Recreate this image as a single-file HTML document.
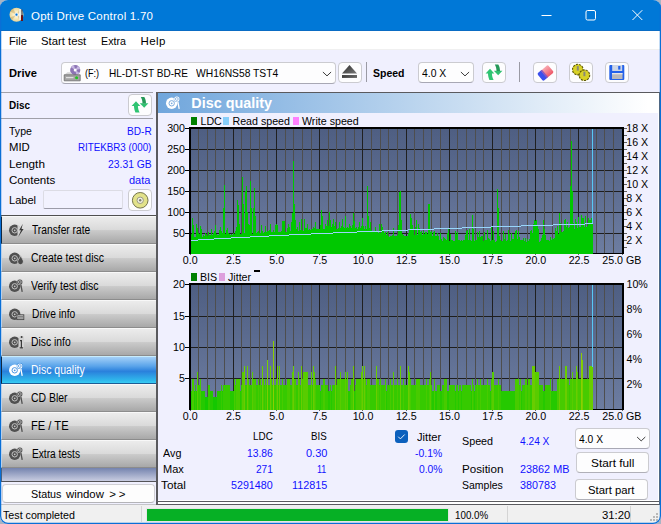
<!DOCTYPE html><html><head><meta charset="utf-8"><title>Opti Drive Control 1.70</title><style>

html,body{margin:0;padding:0}
body{width:661px;height:524px;position:relative;overflow:hidden;background:#a8b4c4;font-family:"Liberation Sans",sans-serif}
#win{position:absolute;left:0;top:0;width:661px;height:524px;background:#f0f0fe;border-radius:8px;overflow:hidden}
.a{position:absolute}
.t{position:absolute;white-space:nowrap;transform-origin:0 0;line-height:20px;height:20px;font-family:"Liberation Sans",sans-serif}
.btn{position:absolute;box-sizing:border-box;border:1px solid #cbcbd0;border-radius:4px;background:#fdfdfe}
.nav{position:absolute;left:1px;width:155px;height:28px;box-sizing:border-box;border-left:1px solid #f0f0f4;border-top:1px solid #f8f8f8;border-bottom:1px solid #8c8c8c;
 background:linear-gradient(#ececec 0%,#dadada 48%,#cacaca 52%,#a8a8a8 100%)}
.nav.sel{border-left:1px solid #101010;border-top:1px solid #c8ecfc;border-bottom:1px solid #1c5c94;background:linear-gradient(#a4d0f8 0%,#5aa4ea 35%,#2a80dc 55%,#30b8ec 90%,#38ccf4 100%)}

</style></head><body><div id="win">
<div class="a" style="left:0;top:0;width:661px;height:31px;background:#0078d7"></div>
<div class="a" style="left:0;top:30px;width:661px;height:1px;background:#0a6cc4"></div>
<div class="a" style="left:1px;top:31px;width:659px;height:18px;background:#fff"></div>
<div class="a" style="left:1px;top:49px;width:659px;height:1px;background:#f0f0f0"></div>
<svg class="a" style="left:8px;top:6px" width="18" height="18" viewBox="0 0 18 18"><defs><radialGradient id="cd"><stop offset="0.3" stop-color="#fff6d0"/><stop offset="1" stop-color="#e8d498"/></radialGradient></defs><circle cx="8.5" cy="8.7" r="7" fill="url(#cd)"/><path d="M8.5 8.7L2.2 5.6A7 7 0 0 1 5 2.6ZM8.5 8.7L14.8 11.8A7 7 0 0 1 12 14.8ZM8.5 8.7L4 14A7 7 0 0 1 2 11.5ZM8.5 8.7L12 2.6A7 7 0 0 1 14.6 5.2Z" fill="#b89850" fill-opacity="0.4"/><circle cx="8.5" cy="8.7" r="2" fill="#e8e8f0"/><circle cx="8.5" cy="8.7" r="1.1" fill="#0078d7"/><rect x="11.2" y="3" width="1.6" height="11" fill="#f4f4f4"/><rect x="13" y="9" width="2" height="6" fill="#701010"/><rect x="13.4" y="3.5" width="1.2" height="6" fill="#3a4a6a"/></svg>
<svg class="a" style="left:530px;top:0" width="131" height="31" viewBox="530 0 131 31" fill="none" stroke="#fff" stroke-width="1"><path d="M541.5 15.5H551.5"/><rect x="586" y="10.5" width="9.5" height="9.5" rx="1.5"/><path d="M632.5 10.2L642.3 20M642.3 10.2L632.5 20"/></svg>
<div class="btn" style="left:61px;top:62px;width:275px;height:22px;border-bottom-color:#a8a8b4"></div>
<div class="btn" style="left:338px;top:62px;width:24px;height:21px"></div>
<div class="a" style="left:366px;top:62px;width:1px;height:20px;background:#9a9aa4"></div>
<div class="btn" style="left:418px;top:62px;width:56px;height:21px;border-bottom-color:#a8a8b4"></div>
<div class="btn" style="left:482px;top:62px;width:24px;height:21px"></div>
<div class="a" style="left:519px;top:62px;width:1px;height:20px;background:#9a9aa4"></div>
<div class="btn" style="left:533px;top:62px;width:24px;height:21px"></div>
<div class="btn" style="left:569px;top:62px;width:24px;height:21px"></div>
<div class="btn" style="left:605px;top:62px;width:24px;height:21px"></div>
<div class="btn" style="left:128px;top:94px;width:24px;height:22px"></div>
<div class="btn" style="left:128px;top:189px;width:24px;height:22px"></div>
<div class="a" style="left:1px;top:92px;width:152px;height:1px;background:#a0a0a8"></div>
<div class="a" style="left:1px;top:118px;width:152px;height:1px;background:#a0a0a8"></div>
<div class="a" style="left:43px;top:190px;width:80px;height:19px;box-sizing:border-box;border:1px solid #dcdce4;border-bottom-color:#9c9ca8;border-radius:2px;background:#f2f2fe"></div>
<div class="a" style="left:1px;top:215px;width:155px;height:1px;background:#505050"></div>
<div class="nav" style="top:216px;border-left-color:#101010"><svg width="18" height="17" viewBox="0 0 18 17" style="position:absolute;left:5.6px;top:4.7px"><circle cx="6.7" cy="8.3" r="5.7" fill="#505050"/><circle cx="6.7" cy="8.3" r="2.7" fill="none" stroke="#c4c4c4" stroke-width="1"/><circle cx="6.7" cy="8.3" r="0.9" fill="#c4c4c4"/><path d="M9.5 2.5L16 8.3L9.5 14Z" fill="#d2d2d2"/><path d="M14.8 1.8L11.2 8.2H13L10.2 15L15.6 7H13.5Z" fill="#3a3a3a"/></svg></div>
<div class="nav" style="top:244px"><svg width="18" height="17" viewBox="0 0 18 17" style="position:absolute;left:5.6px;top:4.7px"><circle cx="6.7" cy="8.3" r="5.7" fill="#505050"/><circle cx="6.7" cy="8.3" r="2.7" fill="none" stroke="#c4c4c4" stroke-width="1"/><circle cx="6.7" cy="8.3" r="0.9" fill="#c4c4c4"/><path d="M12.6 5.6C13.8 8.4 15.4 9.6 15.4 11.8A2.9 2.9 0 0 1 9.6 11.8C9.6 9.8 11.6 8.6 12.6 5.6Z" fill="#4a4a4a" stroke="#d2d2d2" stroke-width="0.8"/></svg></div>
<div class="nav" style="top:272px"><svg width="18" height="17" viewBox="0 0 18 17" style="position:absolute;left:5.6px;top:4.7px"><circle cx="6.7" cy="8.3" r="5.7" fill="#505050"/><circle cx="6.7" cy="8.3" r="2.7" fill="none" stroke="#c4c4c4" stroke-width="1"/><circle cx="6.7" cy="8.3" r="0.9" fill="#c4c4c4"/><circle cx="11.8" cy="4" r="3.1" fill="#d2d2d2"/><circle cx="11.8" cy="4" r="2.6" fill="#505050"/><circle cx="11.8" cy="4" r="1.4" fill="none" stroke="#c4c4c4" stroke-width="0.8"/><path d="M12.8 6.5L14.2 13.8" stroke="#505050" stroke-width="1.3"/></svg></div>
<div class="nav" style="top:300px"><svg width="18" height="17" viewBox="0 0 18 17" style="position:absolute;left:5.6px;top:4.7px"><circle cx="6.7" cy="8.3" r="5.7" fill="#505050"/><circle cx="6.7" cy="8.3" r="2.7" fill="none" stroke="#c4c4c4" stroke-width="1"/><circle cx="6.7" cy="8.3" r="0.9" fill="#c4c4c4"/><rect x="9" y="8.8" width="6.8" height="4.8" fill="#c8c8c8" stroke="#4a4a4a" stroke-width="0.9"/><path d="M10 10.6H15M10 12H15" stroke="#5a5a5a" stroke-width="0.7"/></svg></div>
<div class="nav" style="top:328px"><svg width="18" height="17" viewBox="0 0 18 17" style="position:absolute;left:5.6px;top:4.7px"><circle cx="6.7" cy="8.3" r="5.7" fill="#505050"/><circle cx="6.7" cy="8.3" r="2.7" fill="none" stroke="#c4c4c4" stroke-width="1"/><circle cx="6.7" cy="8.3" r="0.9" fill="#c4c4c4"/><path d="M10.5 2.5L16 2.5L16 15L10.5 15Z" fill="#d2d2d2"/><circle cx="13.6" cy="3" r="1" fill="#3a3a3a"/><path d="M12 6H14V13.2H15.2V14.4H11.6V13.2H12.8V7.2H12Z" fill="#3a3a3a"/></svg></div>
<div class="nav sel" style="top:356px"><svg width="18" height="17" viewBox="0 0 18 17" style="position:absolute;left:5.6px;top:4.7px"><circle cx="6.7" cy="8.3" r="5.7" fill="#fff"/><circle cx="6.7" cy="8.3" r="2.7" fill="none" stroke="#4c96e2" stroke-width="1"/><circle cx="6.7" cy="8.3" r="0.9" fill="#4c96e2"/><circle cx="11.8" cy="4" r="3.1" fill="#2f86dc"/><circle cx="11.8" cy="4" r="2.6" fill="#fff"/><circle cx="11.8" cy="4" r="1.4" fill="none" stroke="#4c96e2" stroke-width="0.8"/><path d="M12.8 6.5L14.2 13.8" stroke="#fff" stroke-width="1.3"/></svg></div>
<div class="nav" style="top:384px"><svg width="18" height="17" viewBox="0 0 18 17" style="position:absolute;left:5.6px;top:4.7px"><circle cx="6.7" cy="8.3" r="5.7" fill="#505050"/><circle cx="6.7" cy="8.3" r="2.7" fill="none" stroke="#c4c4c4" stroke-width="1"/><circle cx="6.7" cy="8.3" r="0.9" fill="#c4c4c4"/><circle cx="11.8" cy="4" r="3.1" fill="#d2d2d2"/><circle cx="11.8" cy="4" r="2.6" fill="#505050"/><circle cx="11.8" cy="4" r="1.4" fill="none" stroke="#c4c4c4" stroke-width="0.8"/><path d="M12.8 6.5L14.2 13.8" stroke="#505050" stroke-width="1.3"/></svg></div>
<div class="nav" style="top:412px"><svg width="18" height="17" viewBox="0 0 18 17" style="position:absolute;left:5.6px;top:4.7px"><circle cx="6.7" cy="8.3" r="5.7" fill="#505050"/><circle cx="6.7" cy="8.3" r="2.7" fill="none" stroke="#c4c4c4" stroke-width="1"/><circle cx="6.7" cy="8.3" r="0.9" fill="#c4c4c4"/><circle cx="11.8" cy="4" r="3.1" fill="#d2d2d2"/><circle cx="11.8" cy="4" r="2.6" fill="#505050"/><circle cx="11.8" cy="4" r="1.4" fill="none" stroke="#c4c4c4" stroke-width="0.8"/><path d="M12.8 6.5L14.2 13.8" stroke="#505050" stroke-width="1.3"/></svg></div>
<div class="nav" style="top:440px"><svg width="18" height="17" viewBox="0 0 18 17" style="position:absolute;left:5.6px;top:4.7px"><circle cx="6.7" cy="8.3" r="5.7" fill="#505050"/><circle cx="6.7" cy="8.3" r="2.7" fill="none" stroke="#c4c4c4" stroke-width="1"/><circle cx="6.7" cy="8.3" r="0.9" fill="#c4c4c4"/><circle cx="11.8" cy="4" r="3.1" fill="#d2d2d2"/><circle cx="11.8" cy="4" r="2.6" fill="#505050"/><circle cx="11.8" cy="4" r="1.4" fill="none" stroke="#c4c4c4" stroke-width="0.8"/><path d="M12.8 6.5L14.2 13.8" stroke="#505050" stroke-width="1.3"/></svg></div>
<div class="a" style="left:1px;top:468px;width:155px;height:13px;background:linear-gradient(#7483ae,#c9cde1)"></div>
<div class="a" style="left:1px;top:468px;width:1px;height:13px;background:#5c5c64"></div>
<div class="a" style="left:1px;top:481px;width:155px;height:1px;background:#545458"></div>
<div class="btn" style="left:2px;top:484px;width:153px;height:19px;background:#fdfdfd;border-color:#d0d0d4;border-bottom-color:#b4b4b8;border-radius:4px"></div>
<div class="a" style="left:156px;top:92px;width:2px;height:413px;background:#5a5a5e"></div>
<div class="a" style="left:156px;top:92px;width:504px;height:1px;background:#5a5a5e"></div>
<div class="a" style="left:659px;top:92px;width:1px;height:413px;background:#66666a"></div>
<div class="a" style="left:658px;top:93px;width:1px;height:408px;background:#fff"></div>
<div class="a" style="left:158px;top:500px;width:501px;height:1px;background:#fff"></div>
<div class="a" style="left:158px;top:501px;width:501px;height:1px;background:#5a5a5e"></div>
<div class="a" style="left:158px;top:502px;width:501px;height:2px;background:#fff"></div>
<div class="a" style="left:156px;top:504px;width:504px;height:1px;background:#5a5a5e"></div>
<div class="a" style="left:158px;top:93px;width:500px;height:20px;background:linear-gradient(90deg,#70a6dc 0%,#ffffff 98%)"></div>
<svg width="18" height="17" viewBox="0 0 18 17" style="position:absolute;left:164.8px;top:95.1px"><circle cx="6.7" cy="8.3" r="5.7" fill="#fff"/><circle cx="6.7" cy="8.3" r="2.7" fill="none" stroke="#7cacde" stroke-width="1"/><circle cx="6.7" cy="8.3" r="0.9" fill="#7cacde"/><circle cx="11.8" cy="4" r="3.1" fill="#7cacde"/><circle cx="11.8" cy="4" r="2.6" fill="#fff"/><circle cx="11.8" cy="4" r="1.4" fill="none" stroke="#7cacde" stroke-width="0.8"/><path d="M12.8 6.5L14.2 13.8" stroke="#fff" stroke-width="1.3"/></svg>
<svg style="position:absolute;left:0;top:0" width="661" height="524" viewBox="0 0 661 524" shape-rendering="crispEdges">
<defs><linearGradient id="cg" x1="0" y1="0" x2="0" y2="1"><stop offset="0" stop-color="#4e5e82"/><stop offset="1" stop-color="#6d7da1"/></linearGradient></defs>
<rect x="189" y="127" width="435" height="127" fill="url(#cg)"/>
<rect x="189" y="283" width="435" height="127" fill="url(#cg)"/>
<rect x="189" y="149" width="434" height="1" fill="#1e1e1e"/>
<rect x="189" y="170" width="434" height="1" fill="#1e1e1e"/>
<rect x="189" y="191" width="434" height="1" fill="#1e1e1e"/>
<rect x="189" y="212" width="434" height="1" fill="#1e1e1e"/>
<rect x="189" y="233" width="434" height="1" fill="#1e1e1e"/>
<rect x="198" y="129" width="1" height="125" fill="#4e4e4e"/>
<rect x="207" y="129" width="1" height="125" fill="#4e4e4e"/>
<rect x="215" y="129" width="1" height="125" fill="#4e4e4e"/>
<rect x="224" y="129" width="1" height="125" fill="#4e4e4e"/>
<rect x="233" y="129" width="1" height="125" fill="#202020"/>
<rect x="241" y="129" width="1" height="125" fill="#4e4e4e"/>
<rect x="250" y="129" width="1" height="125" fill="#4e4e4e"/>
<rect x="259" y="129" width="1" height="125" fill="#4e4e4e"/>
<rect x="267" y="129" width="1" height="125" fill="#4e4e4e"/>
<rect x="276" y="129" width="1" height="125" fill="#202020"/>
<rect x="285" y="129" width="1" height="125" fill="#4e4e4e"/>
<rect x="293" y="129" width="1" height="125" fill="#4e4e4e"/>
<rect x="302" y="129" width="1" height="125" fill="#4e4e4e"/>
<rect x="311" y="129" width="1" height="125" fill="#4e4e4e"/>
<rect x="319" y="129" width="1" height="125" fill="#202020"/>
<rect x="328" y="129" width="1" height="125" fill="#4e4e4e"/>
<rect x="336" y="129" width="1" height="125" fill="#4e4e4e"/>
<rect x="345" y="129" width="1" height="125" fill="#4e4e4e"/>
<rect x="354" y="129" width="1" height="125" fill="#4e4e4e"/>
<rect x="362" y="129" width="1" height="125" fill="#202020"/>
<rect x="371" y="129" width="1" height="125" fill="#4e4e4e"/>
<rect x="380" y="129" width="1" height="125" fill="#4e4e4e"/>
<rect x="388" y="129" width="1" height="125" fill="#4e4e4e"/>
<rect x="397" y="129" width="1" height="125" fill="#4e4e4e"/>
<rect x="406" y="129" width="1" height="125" fill="#202020"/>
<rect x="414" y="129" width="1" height="125" fill="#4e4e4e"/>
<rect x="423" y="129" width="1" height="125" fill="#4e4e4e"/>
<rect x="431" y="129" width="1" height="125" fill="#4e4e4e"/>
<rect x="440" y="129" width="1" height="125" fill="#4e4e4e"/>
<rect x="449" y="129" width="1" height="125" fill="#202020"/>
<rect x="457" y="129" width="1" height="125" fill="#4e4e4e"/>
<rect x="466" y="129" width="1" height="125" fill="#4e4e4e"/>
<rect x="475" y="129" width="1" height="125" fill="#4e4e4e"/>
<rect x="483" y="129" width="1" height="125" fill="#4e4e4e"/>
<rect x="492" y="129" width="1" height="125" fill="#202020"/>
<rect x="501" y="129" width="1" height="125" fill="#4e4e4e"/>
<rect x="509" y="129" width="1" height="125" fill="#4e4e4e"/>
<rect x="518" y="129" width="1" height="125" fill="#4e4e4e"/>
<rect x="527" y="129" width="1" height="125" fill="#4e4e4e"/>
<rect x="535" y="129" width="1" height="125" fill="#202020"/>
<rect x="544" y="129" width="1" height="125" fill="#4e4e4e"/>
<rect x="552" y="129" width="1" height="125" fill="#4e4e4e"/>
<rect x="561" y="129" width="1" height="125" fill="#4e4e4e"/>
<rect x="570" y="129" width="1" height="125" fill="#4e4e4e"/>
<rect x="578" y="129" width="1" height="125" fill="#202020"/>
<rect x="587" y="129" width="1" height="125" fill="#4e4e4e"/>
<rect x="596" y="129" width="1" height="125" fill="#4e4e4e"/>
<rect x="604" y="129" width="1" height="125" fill="#4e4e4e"/>
<rect x="613" y="129" width="1" height="125" fill="#4e4e4e"/>
<rect x="189" y="253" width="434" height="1" fill="#000"/>
<rect x="189" y="316" width="434" height="1" fill="#1e1e1e"/>
<rect x="189" y="347" width="434" height="1" fill="#1e1e1e"/>
<rect x="189" y="378" width="434" height="1" fill="#1e1e1e"/>
<rect x="198" y="285" width="1" height="125" fill="#4e4e4e"/>
<rect x="207" y="285" width="1" height="125" fill="#4e4e4e"/>
<rect x="215" y="285" width="1" height="125" fill="#4e4e4e"/>
<rect x="224" y="285" width="1" height="125" fill="#4e4e4e"/>
<rect x="233" y="285" width="1" height="125" fill="#202020"/>
<rect x="241" y="285" width="1" height="125" fill="#4e4e4e"/>
<rect x="250" y="285" width="1" height="125" fill="#4e4e4e"/>
<rect x="259" y="285" width="1" height="125" fill="#4e4e4e"/>
<rect x="267" y="285" width="1" height="125" fill="#4e4e4e"/>
<rect x="276" y="285" width="1" height="125" fill="#202020"/>
<rect x="285" y="285" width="1" height="125" fill="#4e4e4e"/>
<rect x="293" y="285" width="1" height="125" fill="#4e4e4e"/>
<rect x="302" y="285" width="1" height="125" fill="#4e4e4e"/>
<rect x="311" y="285" width="1" height="125" fill="#4e4e4e"/>
<rect x="319" y="285" width="1" height="125" fill="#202020"/>
<rect x="328" y="285" width="1" height="125" fill="#4e4e4e"/>
<rect x="336" y="285" width="1" height="125" fill="#4e4e4e"/>
<rect x="345" y="285" width="1" height="125" fill="#4e4e4e"/>
<rect x="354" y="285" width="1" height="125" fill="#4e4e4e"/>
<rect x="362" y="285" width="1" height="125" fill="#202020"/>
<rect x="371" y="285" width="1" height="125" fill="#4e4e4e"/>
<rect x="380" y="285" width="1" height="125" fill="#4e4e4e"/>
<rect x="388" y="285" width="1" height="125" fill="#4e4e4e"/>
<rect x="397" y="285" width="1" height="125" fill="#4e4e4e"/>
<rect x="406" y="285" width="1" height="125" fill="#202020"/>
<rect x="414" y="285" width="1" height="125" fill="#4e4e4e"/>
<rect x="423" y="285" width="1" height="125" fill="#4e4e4e"/>
<rect x="431" y="285" width="1" height="125" fill="#4e4e4e"/>
<rect x="440" y="285" width="1" height="125" fill="#4e4e4e"/>
<rect x="449" y="285" width="1" height="125" fill="#202020"/>
<rect x="457" y="285" width="1" height="125" fill="#4e4e4e"/>
<rect x="466" y="285" width="1" height="125" fill="#4e4e4e"/>
<rect x="475" y="285" width="1" height="125" fill="#4e4e4e"/>
<rect x="483" y="285" width="1" height="125" fill="#4e4e4e"/>
<rect x="492" y="285" width="1" height="125" fill="#202020"/>
<rect x="501" y="285" width="1" height="125" fill="#4e4e4e"/>
<rect x="509" y="285" width="1" height="125" fill="#4e4e4e"/>
<rect x="518" y="285" width="1" height="125" fill="#4e4e4e"/>
<rect x="527" y="285" width="1" height="125" fill="#4e4e4e"/>
<rect x="535" y="285" width="1" height="125" fill="#202020"/>
<rect x="544" y="285" width="1" height="125" fill="#4e4e4e"/>
<rect x="552" y="285" width="1" height="125" fill="#4e4e4e"/>
<rect x="561" y="285" width="1" height="125" fill="#4e4e4e"/>
<rect x="570" y="285" width="1" height="125" fill="#4e4e4e"/>
<rect x="578" y="285" width="1" height="125" fill="#202020"/>
<rect x="587" y="285" width="1" height="125" fill="#4e4e4e"/>
<rect x="596" y="285" width="1" height="125" fill="#4e4e4e"/>
<rect x="604" y="285" width="1" height="125" fill="#4e4e4e"/>
<rect x="613" y="285" width="1" height="125" fill="#4e4e4e"/>
<rect x="189" y="409" width="434" height="1" fill="#000"/>
<path d="M190 254V236.8H191V234.1H192V217.9H193V224.6H194V236.5H195V237.0H196V224.2H197V228.0H198V232.5H199V234.0H200V225.8H201V228.9H202V236.5H203V234.9H204V235.6H205V232.8H206V234.4H207V236.1H208V231.9H209V234.9H210V234.6H211V229.1H212V235.0H213V232.9H214V230.9H215V224.7H216V233.7H217V234.9H218V234.6H219V229.5H220V227.2H221V230.6H222V232.5H223V207.8H224V184.7H225V234.2H226V230.4H227V228.2H228V233.4H229V234.3H230V234.8H231V233.7H232V234.5H233V232.7H234V234.1H235V231.3H236V226.8H237V200.2H238V204.9H239V224.0H240V234.0H241V233.5H242V176.7H243V203.6H244V232.7H245V191.0H246V185.5H247V212.0H248V224.2H249V224.8H250V180.9H251V207.8H252V233.7H253V207.8H254V188.1H255V216.2H256V233.0H257V232.1H258V230.6H259V232.7H260V232.7H261V224.5H262V231.3H263V233.1H264V232.3H265V226.2H266V231.5H267V231.1H268V231.1H269V229.6H270V224.2H271V232.1H272V231.5H273V229.7H274V231.9H275V224.7H276V224.0H277V224.9H278V231.5H279V231.9H280V232.0H281V231.0H282V221.3H283V221.0H284V221.4H285V231.7H286V231.7H287V227.7H288V224.3H289V227.4H290V230.8H291V221.7H292V212.8H293V160.8H294V203.6H295V220.3H296V229.3H297V226.9H298V231.3H299V221.5H300V229.6H301V218.8H302V229.5H303V230.8H304V218.9H305V227.5H306V228.3H307V223.7H308V229.9H309V229.4H310V229.6H311V228.9H312V229.1H313V226.5H314V227.9H315V221.7H316V228.5H317V228.9H318V228.8H319V229.3H320V224.7H321V209.9H322V216.2H323V229.0H324V229.2H325V223.6H326V226.4H327V220.1H328V226.2H329V211.6H330V220.4H331V226.7H332V224.1H333V219.2H334V225.8H335V222.2H336V228.6H337V228.9H338V228.2H339V222.1H340V228.0H341V225.5H342V219.4H343V227.3H344V227.5H345V216.2H346V228.2H347V226.7H348V228.2H349V224.4H350V226.0H351V228.2H352V225.0H353V212.8H354V221.2H355V228.1H356V227.4H357V228.5H358V226.7H359V222.4H360V227.9H361V226.4H362V217.9H363V225.6H364V228.7H365V226.1H366V229.2H367V185.5H368V216.2H369V227.7H370V221.7H371V229.5H372V231.6H373V231.7H374V231.4H375V226.8H376V230.8H377V232.3H378V232.8H379V224.2H380V232.5H381V223.8H382V226.6H383V231.1H384V232.6H385V231.6H386V235.1H387V231.8H388V235.6H389V236.7H390V235.6H391V236.3H392V235.4H393V227.9H394V236.0H395V235.6H396V235.8H397V234.8H398V224.8H399V191.8H400V191.0H401V220.4H402V234.3H403V235.4H404V235.9H405V235.6H406V236.2H407V235.5H408V232.9H409V230.1H410V214.1H411V217.9H412V224.5H413V230.4H414V234.5H415V226.5H416V220.4H417V234.9H418V224.2H419V228.2H420V231.9H421V230.8H422V235.4H423V231.3H424V234.1H425V232.4H426V231.5H427V234.1H428V203.6H429V204.4H430V231.9H431V230.7H432V235.9H433V231.9H434V231.0H435V235.8H436V236.0H437V232.6H438V236.2H439V239.6H440V232.6H441V239.0H442V241.2H443V237.0H444V237.6H445V239.3H446V240.3H447V233.0H448V229.1H449V240.9H450V233.6H451V240.2H452V240.0H453V240.6H454V240.8H455V231.3H456V234.4H457V232.3H458V240.0H459V240.3H460V240.9H461V240.1H462V241.1H463V239.9H464V240.4H465V234.6H466V231.2H467V230.1H468V240.4H469V229.0H470V240.4H471V241.4H472V215.4H473V228.8H474V241.1H475V239.8H476V239.5H477V232.2H478V237.2H479V231.0H480V237.2H481V236.3H482V235.6H483V241.3H484V232.1H485V239.9H486V240.1H487V230.3H488V237.9H489V239.0H490V241.4H491V226.7H492V239.9H493V231.3H494V240.4H495V241.5H496V241.1H497V189.3H498V207.8H499V236.1H500V240.0H501V240.5H502V241.2H503V230.8H504V239.1H505V233.8H506V241.0H507V240.2H508V230.1H509V233.8H510V240.5H511V232.5H512V239.3H513V239.4H514V233.6H515V230.5H516V230.1H517V238.9H518V230.7H519V237.2H520V239.6H521V240.4H522V240.0H523V238.0H524V241.3H525V237.5H526V241.6H527V239.0H528V240.6H529V239.1H530V231.3H531V230.2H532V232.8H533V223.8H534V220.4H535V221.2H536V220.4H537V224.6H538V228.8H539V241.5H540V240.5H541V237.6H542V234.5H543V220.4H544V228.8H545V234.8H546V240.3H547V239.8H548V240.0H549V240.9H550V236.6H551V240.2H552V238.4H553V239.2H554V237.9H555V227.8H556V230.7H557V226.2H558V233.8H559V212.8H560V222.5H561V231.9H562V232.3H563V230.7H564V220.3H565V219.1H566V227.3H567V221.9H568V228.3H569V226.8H570V185.5H571V141.0H572V191.0H573V223.3H574V228.5H575V218.9H576V222.0H577V227.5H578V216.9H579V226.8H580V227.3H581V215.4H582V217.9H583V218.0H584V226.9H585V215.9H586V226.6H587V225.9H588V217.9H589V220.2H590V219.6H591V218.3H592V217.0H593V254Z" fill="#00c800"/>
<path d="M190 240h8v1h-8zM198 239h16v1h-16zM214 238h17v1h-17zM231 237h19v1h-19zM250 236h19v1h-19zM269 235h20v1h-20zM289 234h22v1h-22zM311 233h22v1h-22zM333 232h24v1h-24zM357 231h25v1h-25zM382 230h26v1h-26zM408 229h26v1h-26zM434 228h28v1h-28zM462 227h29v1h-29zM491 226h30v1h-30zM521 225h32v1h-32zM553 224h32v1h-32zM585 223h8v1h-8z" fill="#98d6fa"/>
<rect x="592" y="129" width="1.4" height="94" fill="#58c8f4"/>
<rect x="190" y="391.1" width="2" height="18.9" fill="#25c900"/>
<rect x="192" y="378.5" width="2" height="31.5" fill="#47cb00"/>
<rect x="194" y="391.1" width="1" height="18.9" fill="#25c900"/>
<rect x="195" y="384.8" width="1" height="25.2" fill="#36ca00"/>
<rect x="196" y="391.1" width="1" height="18.9" fill="#25c900"/>
<rect x="197" y="372.2" width="1" height="37.8" fill="#58cc00"/>
<rect x="198" y="384.8" width="2" height="25.2" fill="#36ca00"/>
<rect x="200" y="378.5" width="1" height="31.5" fill="#47cb00"/>
<rect x="201" y="391.1" width="4" height="18.9" fill="#25c900"/>
<rect x="205" y="397.4" width="3" height="12.6" fill="#14c800"/>
<rect x="208" y="384.8" width="2" height="25.2" fill="#36ca00"/>
<rect x="210" y="391.1" width="3" height="18.9" fill="#25c900"/>
<rect x="213" y="397.4" width="4" height="12.6" fill="#14c800"/>
<rect x="217" y="391.1" width="4" height="18.9" fill="#25c900"/>
<rect x="221" y="384.8" width="1" height="25.2" fill="#36ca00"/>
<rect x="222" y="391.1" width="1" height="18.9" fill="#25c900"/>
<rect x="223" y="384.8" width="7" height="25.2" fill="#36ca00"/>
<rect x="230" y="391.1" width="4" height="18.9" fill="#25c900"/>
<rect x="234" y="378.5" width="1" height="31.5" fill="#47cb00"/>
<rect x="235" y="384.8" width="1" height="25.2" fill="#36ca00"/>
<rect x="236" y="378.5" width="4" height="31.5" fill="#47cb00"/>
<rect x="240" y="391.1" width="1" height="18.9" fill="#25c900"/>
<rect x="241" y="384.8" width="1" height="25.2" fill="#36ca00"/>
<rect x="242" y="372.2" width="2" height="37.8" fill="#58cc00"/>
<rect x="244" y="365.9" width="1" height="44.1" fill="#69cd00"/>
<rect x="245" y="384.8" width="2" height="25.2" fill="#36ca00"/>
<rect x="247" y="365.9" width="1" height="44.1" fill="#69cd00"/>
<rect x="248" y="378.5" width="1" height="31.5" fill="#47cb00"/>
<rect x="249" y="384.8" width="3" height="25.2" fill="#36ca00"/>
<rect x="252" y="372.2" width="1" height="37.8" fill="#58cc00"/>
<rect x="253" y="378.5" width="3" height="31.5" fill="#47cb00"/>
<rect x="256" y="384.8" width="2" height="25.2" fill="#36ca00"/>
<rect x="258" y="378.5" width="1" height="31.5" fill="#47cb00"/>
<rect x="259" y="384.8" width="1" height="25.2" fill="#36ca00"/>
<rect x="260" y="378.5" width="1" height="31.5" fill="#47cb00"/>
<rect x="261" y="384.8" width="1" height="25.2" fill="#36ca00"/>
<rect x="262" y="365.9" width="1" height="44.1" fill="#69cd00"/>
<rect x="263" y="378.5" width="1" height="31.5" fill="#47cb00"/>
<rect x="264" y="384.8" width="1" height="25.2" fill="#36ca00"/>
<rect x="265" y="378.5" width="1" height="31.5" fill="#47cb00"/>
<rect x="266" y="384.8" width="1" height="25.2" fill="#36ca00"/>
<rect x="267" y="359.6" width="1" height="50.4" fill="#7ace00"/>
<rect x="268" y="384.8" width="2" height="25.2" fill="#36ca00"/>
<rect x="270" y="365.9" width="1" height="44.1" fill="#69cd00"/>
<rect x="271" y="378.5" width="1" height="31.5" fill="#47cb00"/>
<rect x="272" y="384.8" width="1" height="25.2" fill="#36ca00"/>
<rect x="273" y="340.7" width="1" height="69.3" fill="#8cd000"/>
<rect x="274" y="384.8" width="2" height="25.2" fill="#36ca00"/>
<rect x="276" y="378.5" width="1" height="31.5" fill="#47cb00"/>
<rect x="277" y="365.9" width="1" height="44.1" fill="#69cd00"/>
<rect x="278" y="384.8" width="1" height="25.2" fill="#36ca00"/>
<rect x="279" y="365.9" width="1" height="44.1" fill="#69cd00"/>
<rect x="280" y="384.8" width="2" height="25.2" fill="#36ca00"/>
<rect x="282" y="378.5" width="1" height="31.5" fill="#47cb00"/>
<rect x="283" y="384.8" width="4" height="25.2" fill="#36ca00"/>
<rect x="287" y="378.5" width="3" height="31.5" fill="#47cb00"/>
<rect x="290" y="384.8" width="2" height="25.2" fill="#36ca00"/>
<rect x="292" y="372.2" width="1" height="37.8" fill="#58cc00"/>
<rect x="293" y="365.9" width="1" height="44.1" fill="#69cd00"/>
<rect x="294" y="378.5" width="2" height="31.5" fill="#47cb00"/>
<rect x="296" y="384.8" width="2" height="25.2" fill="#36ca00"/>
<rect x="298" y="372.2" width="1" height="37.8" fill="#58cc00"/>
<rect x="299" y="378.5" width="1" height="31.5" fill="#47cb00"/>
<rect x="300" y="384.8" width="1" height="25.2" fill="#36ca00"/>
<rect x="301" y="365.9" width="1" height="44.1" fill="#69cd00"/>
<rect x="302" y="378.5" width="1" height="31.5" fill="#47cb00"/>
<rect x="303" y="372.2" width="5" height="37.8" fill="#58cc00"/>
<rect x="308" y="384.8" width="3" height="25.2" fill="#36ca00"/>
<rect x="311" y="372.2" width="1" height="37.8" fill="#58cc00"/>
<rect x="312" y="384.8" width="1" height="25.2" fill="#36ca00"/>
<rect x="313" y="365.9" width="1" height="44.1" fill="#69cd00"/>
<rect x="314" y="372.2" width="1" height="37.8" fill="#58cc00"/>
<rect x="315" y="378.5" width="1" height="31.5" fill="#47cb00"/>
<rect x="316" y="384.8" width="4" height="25.2" fill="#36ca00"/>
<rect x="320" y="391.1" width="1" height="18.9" fill="#25c900"/>
<rect x="321" y="384.8" width="2" height="25.2" fill="#36ca00"/>
<rect x="323" y="378.5" width="2" height="31.5" fill="#47cb00"/>
<rect x="325" y="384.8" width="3" height="25.2" fill="#36ca00"/>
<rect x="328" y="391.1" width="2" height="18.9" fill="#25c900"/>
<rect x="330" y="384.8" width="1" height="25.2" fill="#36ca00"/>
<rect x="331" y="391.1" width="1" height="18.9" fill="#25c900"/>
<rect x="332" y="384.8" width="3" height="25.2" fill="#36ca00"/>
<rect x="335" y="365.9" width="1" height="44.1" fill="#69cd00"/>
<rect x="336" y="384.8" width="1" height="25.2" fill="#36ca00"/>
<rect x="337" y="378.5" width="3" height="31.5" fill="#47cb00"/>
<rect x="340" y="372.2" width="1" height="37.8" fill="#58cc00"/>
<rect x="341" y="378.5" width="4" height="31.5" fill="#47cb00"/>
<rect x="345" y="372.2" width="1" height="37.8" fill="#58cc00"/>
<rect x="346" y="378.5" width="1" height="31.5" fill="#47cb00"/>
<rect x="347" y="372.2" width="1" height="37.8" fill="#58cc00"/>
<rect x="348" y="391.1" width="2" height="18.9" fill="#25c900"/>
<rect x="350" y="384.8" width="1" height="25.2" fill="#36ca00"/>
<rect x="351" y="378.5" width="2" height="31.5" fill="#47cb00"/>
<rect x="353" y="365.9" width="1" height="44.1" fill="#69cd00"/>
<rect x="354" y="391.1" width="1" height="18.9" fill="#25c900"/>
<rect x="355" y="384.8" width="1" height="25.2" fill="#36ca00"/>
<rect x="356" y="378.5" width="5" height="31.5" fill="#47cb00"/>
<rect x="361" y="372.2" width="1" height="37.8" fill="#58cc00"/>
<rect x="362" y="365.9" width="1" height="44.1" fill="#69cd00"/>
<rect x="363" y="378.5" width="1" height="31.5" fill="#47cb00"/>
<rect x="364" y="365.9" width="1" height="44.1" fill="#69cd00"/>
<rect x="365" y="378.5" width="1" height="31.5" fill="#47cb00"/>
<rect x="366" y="384.8" width="1" height="25.2" fill="#36ca00"/>
<rect x="367" y="378.5" width="3" height="31.5" fill="#47cb00"/>
<rect x="370" y="384.8" width="6" height="25.2" fill="#36ca00"/>
<rect x="376" y="365.9" width="1" height="44.1" fill="#69cd00"/>
<rect x="377" y="378.5" width="2" height="31.5" fill="#47cb00"/>
<rect x="379" y="384.8" width="1" height="25.2" fill="#36ca00"/>
<rect x="380" y="378.5" width="1" height="31.5" fill="#47cb00"/>
<rect x="381" y="384.8" width="4" height="25.2" fill="#36ca00"/>
<rect x="385" y="378.5" width="1" height="31.5" fill="#47cb00"/>
<rect x="386" y="391.1" width="1" height="18.9" fill="#25c900"/>
<rect x="387" y="384.8" width="3" height="25.2" fill="#36ca00"/>
<rect x="390" y="378.5" width="1" height="31.5" fill="#47cb00"/>
<rect x="391" y="384.8" width="2" height="25.2" fill="#36ca00"/>
<rect x="393" y="372.2" width="1" height="37.8" fill="#58cc00"/>
<rect x="394" y="384.8" width="3" height="25.2" fill="#36ca00"/>
<rect x="397" y="378.5" width="1" height="31.5" fill="#47cb00"/>
<rect x="398" y="384.8" width="2" height="25.2" fill="#36ca00"/>
<rect x="400" y="365.9" width="1" height="44.1" fill="#69cd00"/>
<rect x="401" y="384.8" width="2" height="25.2" fill="#36ca00"/>
<rect x="403" y="378.5" width="1" height="31.5" fill="#47cb00"/>
<rect x="404" y="384.8" width="4" height="25.2" fill="#36ca00"/>
<rect x="408" y="365.9" width="1" height="44.1" fill="#69cd00"/>
<rect x="409" y="372.2" width="1" height="37.8" fill="#58cc00"/>
<rect x="410" y="378.5" width="1" height="31.5" fill="#47cb00"/>
<rect x="411" y="384.8" width="5" height="25.2" fill="#36ca00"/>
<rect x="416" y="378.5" width="4" height="31.5" fill="#47cb00"/>
<rect x="420" y="384.8" width="6" height="25.2" fill="#36ca00"/>
<rect x="426" y="378.5" width="1" height="31.5" fill="#47cb00"/>
<rect x="427" y="384.8" width="2" height="25.2" fill="#36ca00"/>
<rect x="429" y="378.5" width="1" height="31.5" fill="#47cb00"/>
<rect x="430" y="372.2" width="1" height="37.8" fill="#58cc00"/>
<rect x="431" y="384.8" width="1" height="25.2" fill="#36ca00"/>
<rect x="432" y="391.1" width="2" height="18.9" fill="#25c900"/>
<rect x="434" y="378.5" width="1" height="31.5" fill="#47cb00"/>
<rect x="435" y="391.1" width="2" height="18.9" fill="#25c900"/>
<rect x="437" y="384.8" width="3" height="25.2" fill="#36ca00"/>
<rect x="440" y="391.1" width="2" height="18.9" fill="#25c900"/>
<rect x="442" y="384.8" width="2" height="25.2" fill="#36ca00"/>
<rect x="444" y="378.5" width="3" height="31.5" fill="#47cb00"/>
<rect x="447" y="391.1" width="2" height="18.9" fill="#25c900"/>
<rect x="449" y="384.8" width="6" height="25.2" fill="#36ca00"/>
<rect x="455" y="391.1" width="1" height="18.9" fill="#25c900"/>
<rect x="456" y="384.8" width="2" height="25.2" fill="#36ca00"/>
<rect x="458" y="391.1" width="1" height="18.9" fill="#25c900"/>
<rect x="459" y="384.8" width="2" height="25.2" fill="#36ca00"/>
<rect x="461" y="391.1" width="1" height="18.9" fill="#25c900"/>
<rect x="462" y="384.8" width="9" height="25.2" fill="#36ca00"/>
<rect x="471" y="391.1" width="1" height="18.9" fill="#25c900"/>
<rect x="472" y="378.5" width="1" height="31.5" fill="#47cb00"/>
<rect x="473" y="384.8" width="1" height="25.2" fill="#36ca00"/>
<rect x="474" y="391.1" width="1" height="18.9" fill="#25c900"/>
<rect x="475" y="384.8" width="2" height="25.2" fill="#36ca00"/>
<rect x="477" y="378.5" width="1" height="31.5" fill="#47cb00"/>
<rect x="478" y="384.8" width="2" height="25.2" fill="#36ca00"/>
<rect x="480" y="378.5" width="1" height="31.5" fill="#47cb00"/>
<rect x="481" y="384.8" width="6" height="25.2" fill="#36ca00"/>
<rect x="487" y="378.5" width="1" height="31.5" fill="#47cb00"/>
<rect x="488" y="384.8" width="2" height="25.2" fill="#36ca00"/>
<rect x="490" y="391.1" width="1" height="18.9" fill="#25c900"/>
<rect x="491" y="378.5" width="1" height="31.5" fill="#47cb00"/>
<rect x="492" y="372.2" width="2" height="37.8" fill="#58cc00"/>
<rect x="494" y="384.8" width="4" height="25.2" fill="#36ca00"/>
<rect x="498" y="378.5" width="1" height="31.5" fill="#47cb00"/>
<rect x="499" y="384.8" width="2" height="25.2" fill="#36ca00"/>
<rect x="501" y="391.1" width="14" height="18.9" fill="#25c900"/>
<rect x="515" y="378.5" width="4" height="31.5" fill="#47cb00"/>
<rect x="519" y="384.8" width="1" height="25.2" fill="#36ca00"/>
<rect x="520" y="378.5" width="1" height="31.5" fill="#47cb00"/>
<rect x="521" y="391.1" width="1" height="18.9" fill="#25c900"/>
<rect x="522" y="384.8" width="3" height="25.2" fill="#36ca00"/>
<rect x="525" y="378.5" width="2" height="31.5" fill="#47cb00"/>
<rect x="527" y="384.8" width="1" height="25.2" fill="#36ca00"/>
<rect x="528" y="378.5" width="2" height="31.5" fill="#47cb00"/>
<rect x="530" y="384.8" width="2" height="25.2" fill="#36ca00"/>
<rect x="532" y="365.9" width="3" height="44.1" fill="#69cd00"/>
<rect x="535" y="372.2" width="4" height="37.8" fill="#58cc00"/>
<rect x="539" y="384.8" width="4" height="25.2" fill="#36ca00"/>
<rect x="543" y="391.1" width="2" height="18.9" fill="#25c900"/>
<rect x="545" y="384.8" width="5" height="25.2" fill="#36ca00"/>
<rect x="550" y="378.5" width="1" height="31.5" fill="#47cb00"/>
<rect x="551" y="391.1" width="6" height="18.9" fill="#25c900"/>
<rect x="557" y="378.5" width="2" height="31.5" fill="#47cb00"/>
<rect x="559" y="365.9" width="1" height="44.1" fill="#69cd00"/>
<rect x="560" y="378.5" width="5" height="31.5" fill="#47cb00"/>
<rect x="565" y="365.9" width="2" height="44.1" fill="#69cd00"/>
<rect x="567" y="378.5" width="2" height="31.5" fill="#47cb00"/>
<rect x="569" y="384.8" width="1" height="25.2" fill="#36ca00"/>
<rect x="570" y="378.5" width="2" height="31.5" fill="#47cb00"/>
<rect x="572" y="372.2" width="1" height="37.8" fill="#58cc00"/>
<rect x="573" y="378.5" width="3" height="31.5" fill="#47cb00"/>
<rect x="576" y="365.9" width="1" height="44.1" fill="#69cd00"/>
<rect x="577" y="372.2" width="1" height="37.8" fill="#58cc00"/>
<rect x="578" y="378.5" width="3" height="31.5" fill="#47cb00"/>
<rect x="581" y="353.3" width="1" height="56.7" fill="#8cd000"/>
<rect x="582" y="359.6" width="1" height="50.4" fill="#7ace00"/>
<rect x="583" y="378.5" width="6" height="31.5" fill="#47cb00"/>
<rect x="589" y="365.9" width="4" height="44.1" fill="#69cd00"/>
<rect x="592" y="285" width="1.4" height="82" fill="#58c8f4"/>
<rect x="189" y="127" width="435" height="2" fill="#000"/>
<rect x="189" y="127" width="2" height="127" fill="#000"/>
<rect x="622" y="127" width="2" height="127" fill="#000"/>
<rect x="189" y="283" width="435" height="2" fill="#000"/>
<rect x="189" y="283" width="2" height="127" fill="#000"/>
<rect x="622" y="283" width="2" height="127" fill="#000"/>
<rect x="185" y="233" width="4" height="1" fill="#000"/>
<rect x="185" y="212" width="4" height="1" fill="#000"/>
<rect x="185" y="191" width="4" height="1" fill="#000"/>
<rect x="185" y="170" width="4" height="1" fill="#000"/>
<rect x="185" y="149" width="4" height="1" fill="#000"/>
<rect x="185" y="128" width="4" height="1" fill="#000"/>
<rect x="185" y="378" width="4" height="1" fill="#000"/>
<rect x="185" y="347" width="4" height="1" fill="#000"/>
<rect x="185" y="316" width="4" height="1" fill="#000"/>
<rect x="185" y="284" width="4" height="1" fill="#000"/>
<rect x="624" y="247" width="3" height="1" fill="#606060"/>
<rect x="624" y="240" width="3" height="1" fill="#606060"/>
<rect x="624" y="233" width="3" height="1" fill="#606060"/>
<rect x="624" y="226" width="3" height="1" fill="#606060"/>
<rect x="624" y="219" width="3" height="1" fill="#606060"/>
<rect x="624" y="212" width="3" height="1" fill="#606060"/>
<rect x="624" y="205" width="3" height="1" fill="#606060"/>
<rect x="624" y="198" width="3" height="1" fill="#606060"/>
<rect x="624" y="191" width="3" height="1" fill="#606060"/>
<rect x="624" y="184" width="3" height="1" fill="#606060"/>
<rect x="624" y="177" width="3" height="1" fill="#606060"/>
<rect x="624" y="170" width="3" height="1" fill="#606060"/>
<rect x="624" y="163" width="3" height="1" fill="#606060"/>
<rect x="624" y="156" width="3" height="1" fill="#606060"/>
<rect x="624" y="149" width="3" height="1" fill="#606060"/>
<rect x="624" y="142" width="3" height="1" fill="#606060"/>
<rect x="624" y="135" width="3" height="1" fill="#606060"/>
<rect x="624" y="128" width="3" height="1" fill="#606060"/>
<rect x="190" y="254" width="1" height="1" fill="#666"/>
<rect x="190" y="410" width="1" height="1" fill="#666"/>
<rect x="233" y="254" width="1" height="1" fill="#666"/>
<rect x="233" y="410" width="1" height="1" fill="#666"/>
<rect x="276" y="254" width="1" height="1" fill="#666"/>
<rect x="276" y="410" width="1" height="1" fill="#666"/>
<rect x="319" y="254" width="1" height="1" fill="#666"/>
<rect x="319" y="410" width="1" height="1" fill="#666"/>
<rect x="362" y="254" width="1" height="1" fill="#666"/>
<rect x="362" y="410" width="1" height="1" fill="#666"/>
<rect x="406" y="254" width="1" height="1" fill="#666"/>
<rect x="406" y="410" width="1" height="1" fill="#666"/>
<rect x="449" y="254" width="1" height="1" fill="#666"/>
<rect x="449" y="410" width="1" height="1" fill="#666"/>
<rect x="492" y="254" width="1" height="1" fill="#666"/>
<rect x="492" y="410" width="1" height="1" fill="#666"/>
<rect x="535" y="254" width="1" height="1" fill="#666"/>
<rect x="535" y="410" width="1" height="1" fill="#666"/>
<rect x="578" y="254" width="1" height="1" fill="#666"/>
<rect x="578" y="410" width="1" height="1" fill="#666"/>
<rect x="622" y="254" width="1" height="1" fill="#666"/>
<rect x="622" y="410" width="1" height="1" fill="#666"/>
<rect x="191" y="117" width="6" height="8" fill="#008000"/>
<rect x="223" y="117" width="6" height="8" fill="#87cefa"/>
<rect x="293" y="117" width="6" height="8" fill="#ff80ff"/>
<rect x="191" y="273" width="6" height="8" fill="#008000"/>
<rect x="219" y="273" width="6" height="8" fill="#dda0dd"/>
<rect x="254" y="270" width="6" height="2" fill="#000"/>
</svg>
<div class="a" style="left:395px;top:430px;width:13px;height:13px;border-radius:3px;background:#0c60bd"></div>
<svg class="a" style="left:395px;top:430px" width="13" height="13" viewBox="0 0 13 13" fill="none" stroke="#e4f0fc" stroke-width="1"><path d="M3.2 6.7L5.4 8.9L9.7 4.5"/></svg>
<div class="btn" style="left:575px;top:428px;width:75px;height:21px;border-bottom-color:#a8a8b4"></div>
<div class="btn" style="left:576px;top:452px;width:73px;height:21px;border-bottom-color:#b0b0b8"></div>
<div class="btn" style="left:575px;top:479px;width:73px;height:21px;border-bottom-color:#b0b0b8"></div>
<div class="a" style="left:1px;top:505px;width:659px;height:18px;background:#f0f0f0"></div>
<div class="a" style="left:1px;top:504px;width:155px;height:1px;background:#c4c4c8"></div>
<div class="a" style="left:146px;top:508px;width:303px;height:14px;background:#e6e6e6"></div>
<div class="a" style="left:147px;top:509px;width:301px;height:12px;background:#06b025"></div>
<div class="a" style="left:141px;top:506px;width:1px;height:16px;background:#d4d4d4"></div>
<div class="a" style="left:507px;top:506px;width:1px;height:16px;background:#d4d4d4"></div>
<div class="a" style="left:630px;top:506px;width:1px;height:16px;background:#d4d4d4"></div>
<div class="a" style="left:656px;top:513px;width:2px;height:2px;background:#b8b8b8"></div>
<div class="a" style="left:653px;top:516px;width:2px;height:2px;background:#b8b8b8"></div>
<div class="a" style="left:656px;top:516px;width:2px;height:2px;background:#b8b8b8"></div>
<div class="a" style="left:650px;top:519px;width:2px;height:2px;background:#b8b8b8"></div>
<div class="a" style="left:653px;top:519px;width:2px;height:2px;background:#b8b8b8"></div>
<div class="a" style="left:656px;top:519px;width:2px;height:2px;background:#b8b8b8"></div>
<svg class="a" style="left:0;top:0" width="661" height="524" viewBox="0 0 661 524"><rect x="0" y="-10" width="661" height="534" rx="8" fill="none" stroke="#0a6fd6" stroke-width="2.5"/></svg>
<svg class="a" style="left:0;top:0" width="661" height="524" viewBox="0 0 661 524"><defs><linearGradient id="ej" x1="0" y1="0" x2="1" y2="1"><stop offset="0" stop-color="#2a2a2a"/><stop offset="1" stop-color="#7a7a7a"/></linearGradient><linearGradient id="er" x1="0" y1="0" x2="0" y2="1"><stop offset="0" stop-color="#f8a8b0"/><stop offset="1" stop-color="#ee5868"/></linearGradient></defs><path d="M322.9 72l4.1 3.9l4.1 -3.9" fill="none" stroke="#3c3c3c" stroke-width="1"/><path d="M460.9 72l4.1 3.9l4.1 -3.9" fill="none" stroke="#3c3c3c" stroke-width="1"/><path d="M637.1 437l4.1 3.9l4.1 -3.9" fill="none" stroke="#3c3c3c" stroke-width="1"/><circle cx="75.2" cy="70.1" r="5.1" fill="#8c74b4"/><path d="M75.2 70.1L71 67.2A5.1 5.1 0 0 1 74 65.1ZM75.2 70.1L79.5 73A5.1 5.1 0 0 1 76.5 75ZM75.2 70.1L78 65.8A5.1 5.1 0 0 1 80.2 69Z" fill="#c4b4e0"/><circle cx="75.2" cy="70.1" r="1.5" fill="#fff"/><path d="M67.5 72.3H71L72 74.8H64.2Z" fill="#d4d4d4"/><path d="M64.2 74.8H80.2V80.8H64.2Z" fill="#a4a4a4" stroke="#6a6a6a" stroke-width="0.8"/><rect x="66" y="77" width="7.5" height="1.2" fill="#e0e0e0"/><circle cx="76.6" cy="77.7" r="1.5" fill="#22c422"/><path d="M349.5 65L357 73.6H342Z" fill="url(#ej)"/><rect x="342" y="75.1" width="15" height="2.9" fill="url(#ej)"/><g transform="translate(354 -32.5)"><path d="M131.6 106L136 101.2L140.3 106H137.9C138 108.5 138.6 110.6 139.6 112.4H135.4C134.5 110.2 134 108.2 134 106Z" fill="#2fc472"/><path d="M139.8 103.2H148.4L144.2 107.8Z" fill="#2fc070"/><path d="M142.5 103.4C142.5 101 141.9 99 140.8 97H144.3C145.5 99 146 101 146 103.4Z" fill="#259858"/></g><g transform="translate(0 0)"><path d="M131.6 106L136 101.2L140.3 106H137.9C138 108.5 138.6 110.6 139.6 112.4H135.4C134.5 110.2 134 108.2 134 106Z" fill="#2fc472"/><path d="M139.8 103.2H148.4L144.2 107.8Z" fill="#2fc070"/><path d="M142.5 103.4C142.5 101 141.9 99 140.8 97H144.3C145.5 99 146 101 146 103.4Z" fill="#259858"/></g><g transform="rotate(-40 545.5 73)"><rect x="538.5" y="68.2" width="6.5" height="9.6" rx="1.5" fill="#3c50ec"/><rect x="543.5" y="68.2" width="9" height="9.6" rx="1.5" fill="url(#er)"/><rect x="543.3" y="68.2" width="1.6" height="9.6" fill="#8a58c0"/></g><circle cx="577.8" cy="69.6" r="5.3" fill="#cfc81e" stroke="#5e5806" stroke-width="1.1" stroke-dasharray="2.2 1"/><circle cx="577.8" cy="69.6" r="4.2" fill="#d8d228"/><rect x="576.8" y="66.1" width="2" height="4.5" fill="#8a8a7a"/><circle cx="584.4" cy="75.2" r="5.3" fill="#cfc81e" stroke="#5e5806" stroke-width="1.1" stroke-dasharray="2.2 1"/><circle cx="584.4" cy="75.2" r="4.2" fill="#d8d228"/><rect x="583.4" y="71.7" width="2" height="4.5" fill="#8a8a7a"/><rect x="609.3" y="65" width="15" height="15" rx="1" fill="#2462ea"/><rect x="612.2" y="65" width="10" height="6" fill="#cdd6e6"/><rect x="618.2" y="66" width="2.2" height="3.6" fill="#2462ea"/><rect x="612" y="73" width="10.5" height="6" fill="#b8b8bc"/><rect x="612" y="73" width="10.5" height="1.3" fill="#e6e6ea"/><circle cx="140.2" cy="200.3" r="7.8" fill="#e2e28a" stroke="#74744c" stroke-width="1"/><circle cx="140.2" cy="200.3" r="3.2" fill="#f2f2e2" stroke="#9a9a80" stroke-width="1"/><circle cx="140.2" cy="200.3" r="1.2" fill="#7c7c6c"/></svg>
<span class="t" style="left:31.00px;top:6.00px;font-size:11.5px;color:#fff;letter-spacing:0.224px;">Opti Drive Control 1.70</span>
<span class="t" style="left:9.00px;top:31.00px;font-size:11.5px;color:#000;transform:scaleX(0.9650);">File</span>
<span class="t" style="left:40.50px;top:31.00px;font-size:11.5px;color:#000;transform:scaleX(0.9824);">Start test</span>
<span class="t" style="left:100.50px;top:31.00px;font-size:11.5px;color:#000;transform:scaleX(0.9291);">Extra</span>
<span class="t" style="left:140.50px;top:31.00px;font-size:11.5px;color:#000;letter-spacing:0.415px;">Help</span>
<span class="t" style="left:9.30px;top:63.00px;font-size:11.5px;color:#000;transform:scaleX(0.9693);font-weight:bold;">Drive</span>
<span class="t" style="left:84.50px;top:63.00px;font-size:11.5px;color:#000;transform:scaleX(0.7867);">(F:)</span>
<span class="t" style="left:108.80px;top:63.00px;font-size:11.5px;color:#000;transform:scaleX(0.8731);">HL-DT-ST BD-RE</span>
<span class="t" style="left:195.80px;top:63.00px;font-size:11.5px;color:#000;transform:scaleX(0.8960);">WH16NS58 TST4</span>
<span class="t" style="left:373.00px;top:63.00px;font-size:11.5px;color:#000;transform:scaleX(0.9134);font-weight:bold;">Speed</span>
<span class="t" style="left:422.00px;top:63.00px;font-size:11.5px;color:#000;transform:scaleX(0.9013);">4.0 X</span>
<span class="t" style="left:9.30px;top:95.00px;font-size:11.5px;color:#000;transform:scaleX(0.8636);font-weight:bold;">Disc</span>
<span class="t" style="left:9.00px;top:121.00px;font-size:11.5px;color:#000;transform:scaleX(0.9170);">Type</span>
<span class="t" style="left:9.30px;top:137.00px;font-size:11.5px;color:#000;transform:scaleX(0.9868);">MID</span>
<span class="t" style="left:9.30px;top:154.00px;font-size:11.5px;color:#000;transform:scaleX(1.0208);">Length</span>
<span class="t" style="left:9.00px;top:170.00px;font-size:11.5px;color:#000;transform:scaleX(1.0048);">Contents</span>
<span class="t" style="left:9.30px;top:190.00px;font-size:11.5px;color:#000;transform:scaleX(0.9607);">Label</span>
<span class="t" style="left:127.00px;top:121.00px;font-size:11.5px;color:#1010ff;transform:scaleX(0.8811);">BD-R</span>
<span class="t" style="left:78.30px;top:137.00px;font-size:11.5px;color:#1010ff;transform:scaleX(0.8502);">RITEKBR3 (000)</span>
<span class="t" style="left:107.50px;top:154.00px;font-size:11.5px;color:#1010ff;transform:scaleX(0.8995);">23.31 GB</span>
<span class="t" style="left:129.00px;top:170.00px;font-size:11.5px;color:#1010ff;transform:scaleX(0.9571);">data</span>
<span class="t" style="left:31.50px;top:220.00px;font-size:12px;color:#000;transform:scaleX(0.8531);">Transfer rate</span>
<span class="t" style="left:30.50px;top:248.00px;font-size:12px;color:#000;transform:scaleX(0.8756);">Create test disc</span>
<span class="t" style="left:31.00px;top:276.00px;font-size:12px;color:#000;transform:scaleX(0.8725);">Verify test disc</span>
<span class="t" style="left:31.50px;top:304.00px;font-size:12px;color:#000;transform:scaleX(0.8528);">Drive info</span>
<span class="t" style="left:31.30px;top:332.00px;font-size:12px;color:#000;transform:scaleX(0.8632);">Disc info</span>
<span class="t" style="left:31.30px;top:360.00px;font-size:12px;color:#fff;transform:scaleX(0.8753);">Disc quality</span>
<span class="t" style="left:30.50px;top:388.00px;font-size:12px;color:#000;transform:scaleX(0.8688);">CD Bler</span>
<span class="t" style="left:31.00px;top:416.00px;font-size:12px;color:#000;transform:scaleX(0.9295);">FE / TE</span>
<span class="t" style="left:31.50px;top:444.00px;font-size:12px;color:#000;transform:scaleX(0.8468);">Extra tests</span>
<span class="t" style="left:30.50px;top:484.00px;font-size:11.5px;color:#000;transform:scaleX(0.9345);">Status</span>
<span class="t" style="left:66.49px;top:484.00px;font-size:11.5px;color:#000;transform:scaleX(0.9863);">window</span>
<span class="t" style="left:109.30px;top:484.00px;font-size:11.5px;color:#000;">&gt;</span>
<span class="t" style="left:118.80px;top:484.00px;font-size:11.5px;color:#000;">&gt;</span>
<span class="t" style="left:3.30px;top:505.00px;font-size:11.5px;color:#000;transform:scaleX(0.9292);">Test completed</span>
<span class="t" style="left:191.30px;top:93.00px;font-size:14.4px;color:#fff;font-weight:bold;">Disc quality</span>
<span class="t" style="left:252.50px;top:426.00px;font-size:11.5px;color:#000;transform:scaleX(0.8590);">LDC</span>
<span class="t" style="left:310.50px;top:426.00px;font-size:11.5px;color:#000;transform:scaleX(0.8481);">BIS</span>
<span class="t" style="left:163.30px;top:443.00px;font-size:11.5px;color:#000;transform:scaleX(0.9369);">Avg</span>
<span class="t" style="left:163.30px;top:459.00px;font-size:11.5px;color:#000;transform:scaleX(0.9556);">Max</span>
<span class="t" style="left:161.30px;top:475.00px;font-size:11.5px;color:#000;transform:scaleX(1.0237);">Total</span>
<span class="t" style="left:247.00px;top:443.00px;font-size:11.5px;color:#1010ff;transform:scaleX(0.8984);">13.86</span>
<span class="t" style="left:255.50px;top:459.00px;font-size:11.5px;color:#1010ff;transform:scaleX(0.8781);">271</span>
<span class="t" style="left:230.70px;top:475.00px;font-size:11.5px;color:#1010ff;transform:scaleX(0.9307);">5291480</span>
<span class="t" style="left:306.00px;top:443.00px;font-size:11.5px;color:#1010ff;transform:scaleX(0.9551);">0.30</span>
<span class="t" style="left:317.00px;top:459.00px;font-size:11.5px;color:#1010ff;transform:scaleX(0.7797);">11</span>
<span class="t" style="left:292.00px;top:475.00px;font-size:11.5px;color:#1010ff;transform:scaleX(0.9428);">112815</span>
<span class="t" style="left:417.00px;top:427.00px;font-size:11.5px;color:#000;transform:scaleX(0.9685);">Jitter</span>
<span class="t" style="left:415.00px;top:443.00px;font-size:11.5px;color:#1010ff;transform:scaleX(0.9055);">-0.1%</span>
<span class="t" style="left:418.70px;top:459.00px;font-size:11.5px;color:#1010ff;transform:scaleX(0.8966);">0.0%</span>
<span class="t" style="left:461.60px;top:431.00px;font-size:11.5px;color:#000;transform:scaleX(0.9343);">Speed</span>
<span class="t" style="left:461.60px;top:459.00px;font-size:11.5px;color:#000;transform:scaleX(1.0119);">Position</span>
<span class="t" style="left:461.60px;top:475.00px;font-size:11.5px;color:#000;transform:scaleX(0.9113);">Samples</span>
<span class="t" style="left:520.00px;top:431.00px;font-size:11.5px;color:#1010ff;transform:scaleX(0.8845);">4.24 X</span>
<span class="t" style="left:520.00px;top:459.00px;font-size:11.5px;color:#1010ff;transform:scaleX(0.9421);">23862 MB</span>
<span class="t" style="left:520.00px;top:475.00px;font-size:11.5px;color:#1010ff;transform:scaleX(0.9347);">380783</span>
<span class="t" style="left:578.70px;top:429.00px;font-size:11.5px;color:#000;transform:scaleX(0.8940);">4.0 X</span>
<span class="t" style="left:590.60px;top:453.00px;font-size:11.5px;color:#000;transform:scaleX(1.0282);">Start full</span>
<span class="t" style="left:587.60px;top:480.00px;font-size:11.5px;color:#000;transform:scaleX(0.9833);">Start part</span>
<span class="t" style="left:455.00px;top:505.00px;font-size:11.5px;color:#000;transform:scaleX(0.8510);">100.0%</span>
<span class="t" style="left:602.00px;top:505.00px;font-size:11.5px;color:#000;transform:scaleX(0.9865);">31:20</span>
<span class="t" style="left:182.86px;top:250.00px;font-size:10.67px;color:#000;">0.0</span>
<span class="t" style="left:182.86px;top:406.00px;font-size:10.67px;color:#000;">0.0</span>
<span class="t" style="left:226.06px;top:250.00px;font-size:10.67px;color:#000;">2.5</span>
<span class="t" style="left:226.06px;top:406.00px;font-size:10.67px;color:#000;">2.5</span>
<span class="t" style="left:269.26px;top:250.00px;font-size:10.67px;color:#000;">5.0</span>
<span class="t" style="left:269.26px;top:406.00px;font-size:10.67px;color:#000;">5.0</span>
<span class="t" style="left:312.46px;top:250.00px;font-size:10.67px;color:#000;">7.5</span>
<span class="t" style="left:312.46px;top:406.00px;font-size:10.67px;color:#000;">7.5</span>
<span class="t" style="left:352.69px;top:250.00px;font-size:10.67px;color:#000;">10.0</span>
<span class="t" style="left:352.69px;top:406.00px;font-size:10.67px;color:#000;">10.0</span>
<span class="t" style="left:395.89px;top:250.00px;font-size:10.67px;color:#000;">12.5</span>
<span class="t" style="left:395.89px;top:406.00px;font-size:10.67px;color:#000;">12.5</span>
<span class="t" style="left:439.09px;top:250.00px;font-size:10.67px;color:#000;">15.0</span>
<span class="t" style="left:439.09px;top:406.00px;font-size:10.67px;color:#000;">15.0</span>
<span class="t" style="left:482.29px;top:250.00px;font-size:10.67px;color:#000;">17.5</span>
<span class="t" style="left:482.29px;top:406.00px;font-size:10.67px;color:#000;">17.5</span>
<span class="t" style="left:525.49px;top:250.00px;font-size:10.67px;color:#000;">20.0</span>
<span class="t" style="left:525.49px;top:406.00px;font-size:10.67px;color:#000;">20.0</span>
<span class="t" style="left:568.69px;top:250.00px;font-size:10.67px;color:#000;">22.5</span>
<span class="t" style="left:568.69px;top:406.00px;font-size:10.67px;color:#000;">22.5</span>
<span class="t" style="left:602.30px;top:250.00px;font-size:10.67px;color:#000;">25.0 GB</span>
<span class="t" style="left:602.30px;top:406.00px;font-size:10.67px;color:#000;">25.0 GB</span>
<span class="t" style="left:173.07px;top:223.00px;font-size:10.67px;color:#000;">50</span>
<span class="t" style="left:167.15px;top:202.00px;font-size:10.67px;color:#000;">100</span>
<span class="t" style="left:167.15px;top:181.00px;font-size:10.67px;color:#000;">150</span>
<span class="t" style="left:167.15px;top:160.00px;font-size:10.67px;color:#000;">200</span>
<span class="t" style="left:167.15px;top:139.00px;font-size:10.67px;color:#000;">250</span>
<span class="t" style="left:167.15px;top:118.00px;font-size:10.67px;color:#000;">300</span>
<span class="t" style="left:626.30px;top:230.00px;font-size:10.67px;color:#000;">2 X</span>
<span class="t" style="left:626.30px;top:216.00px;font-size:10.67px;color:#000;">4 X</span>
<span class="t" style="left:626.30px;top:202.00px;font-size:10.67px;color:#000;">6 X</span>
<span class="t" style="left:626.30px;top:188.00px;font-size:10.67px;color:#000;">8 X</span>
<span class="t" style="left:626.30px;top:174.00px;font-size:10.67px;color:#000;">10 X</span>
<span class="t" style="left:626.30px;top:160.00px;font-size:10.67px;color:#000;">12 X</span>
<span class="t" style="left:626.30px;top:146.00px;font-size:10.67px;color:#000;">14 X</span>
<span class="t" style="left:626.30px;top:132.00px;font-size:10.67px;color:#000;">16 X</span>
<span class="t" style="left:626.30px;top:118.00px;font-size:10.67px;color:#000;">18 X</span>
<span class="t" style="left:179.00px;top:368.00px;font-size:10.67px;color:#000;">5</span>
<span class="t" style="left:173.07px;top:337.00px;font-size:10.67px;color:#000;">10</span>
<span class="t" style="left:173.07px;top:306.00px;font-size:10.67px;color:#000;">15</span>
<span class="t" style="left:173.07px;top:274.00px;font-size:10.67px;color:#000;">20</span>
<span class="t" style="left:626.50px;top:374.00px;font-size:10.67px;color:#000;">2%</span>
<span class="t" style="left:626.50px;top:349.00px;font-size:10.67px;color:#000;">4%</span>
<span class="t" style="left:626.50px;top:324.00px;font-size:10.67px;color:#000;">6%</span>
<span class="t" style="left:626.50px;top:299.00px;font-size:10.67px;color:#000;">8%</span>
<span class="t" style="left:626.50px;top:274.00px;font-size:10.67px;color:#000;">10%</span>
<span class="t" style="left:200.50px;top:111.00px;font-size:10.67px;color:#000;">LDC</span>
<span class="t" style="left:232.50px;top:111.00px;font-size:10.67px;color:#000;">Read speed</span>
<span class="t" style="left:302.00px;top:111.00px;font-size:10.67px;color:#000;">Write speed</span>
<span class="t" style="left:200.00px;top:267.00px;font-size:10.67px;color:#000;">BIS</span>
<span class="t" style="left:228.00px;top:267.00px;font-size:10.67px;color:#000;">Jitter</span>
</div></body></html>
